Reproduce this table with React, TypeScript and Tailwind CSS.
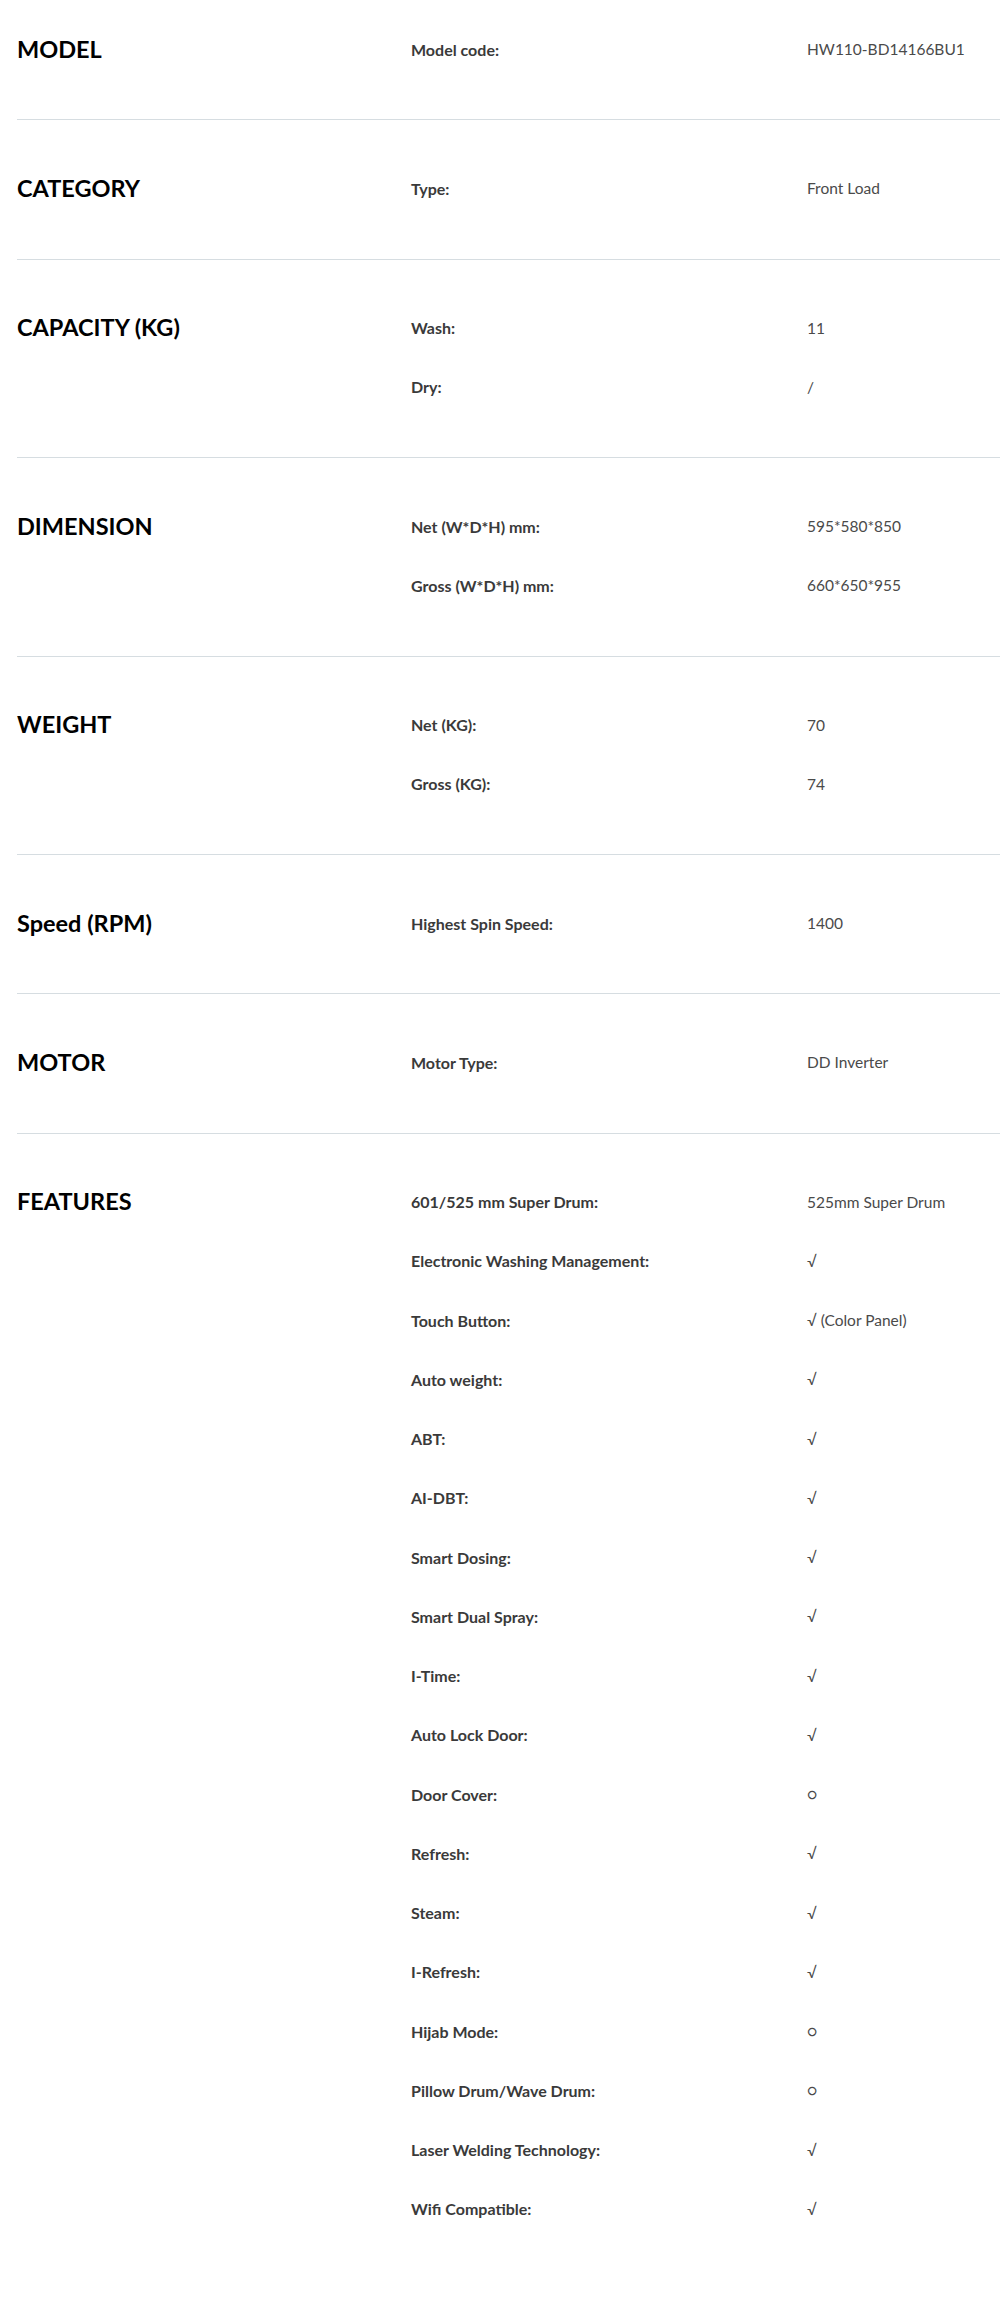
import React from 'react';

type Spec = { label: string; value: string };
type Section = { title: string; specs: Spec[] };

const SECTIONS: Section[] = [
  { title: 'MODEL', specs: [{ label: 'Model code:', value: 'HW110-BD14166BU1' }] },
  { title: 'CATEGORY', specs: [{ label: 'Type:', value: 'Front Load' }] },
  {
    title: 'CAPACITY (KG)',
    specs: [
      { label: 'Wash:', value: '11' },
      { label: 'Dry:', value: '/' },
    ],
  },
  {
    title: 'DIMENSION',
    specs: [
      { label: 'Net (W*D*H) mm:', value: '595*580*850' },
      { label: 'Gross (W*D*H) mm:', value: '660*650*955' },
    ],
  },
  {
    title: 'WEIGHT',
    specs: [
      { label: 'Net (KG):', value: '70' },
      { label: 'Gross (KG):', value: '74' },
    ],
  },
  { title: 'Speed (RPM)', specs: [{ label: 'Highest Spin Speed:', value: '1400' }] },
  { title: 'MOTOR', specs: [{ label: 'Motor Type:', value: 'DD Inverter' }] },
  {
    title: 'FEATURES',
    specs: [
      { label: '601/525 mm Super Drum:', value: '525mm Super Drum' },
      { label: 'Electronic Washing Management:', value: '√' },
      { label: 'Touch Button:', value: '√ (Color Panel)' },
      { label: 'Auto weight:', value: '√' },
      { label: 'ABT:', value: '√' },
      { label: 'AI-DBT:', value: '√' },
      { label: 'Smart Dosing:', value: '√' },
      { label: 'Smart Dual Spray:', value: '√' },
      { label: 'I-Time:', value: '√' },
      { label: 'Auto Lock Door:', value: '√' },
      { label: 'Door Cover:', value: '○' },
      { label: 'Refresh:', value: '√' },
      { label: 'Steam:', value: '√' },
      { label: 'I-Refresh:', value: '√' },
      { label: 'Hijab Mode:', value: '○' },
      { label: 'Pillow Drum/Wave Drum:', value: '○' },
      { label: 'Laser Welding Technology:', value: '√' },
      { label: 'Wifi Compatible:', value: '√' },
    ],
  },
];

function SpecSection({ section, first, last }: { section: Section; first: boolean; last: boolean }) {
  return (
    <div
      className={`flex ${first ? 'pt-[20px]' : 'pt-[39px]'} ${
        last ? 'pb-[27px]' : 'pb-[40px] border-b border-[#d6dde1]'
      }`}
    >
      <div className="w-[394px] shrink-0 h-[59.25px] flex items-center">
        <h3 className="text-[23.5px] font-bold text-black leading-none">{section.title}</h3>
      </div>
      <div className="flex-1">
        {section.specs.map((s) => (
          <div key={s.label} className="flex h-[59.25px] items-center">
            <div className="w-[396px] shrink-0 text-[16px] font-bold text-[#3a3a3a]">{s.label}</div>
            <div className="text-[15.5px] text-[#4a4a4a]">{s.value}</div>
          </div>
        ))}
      </div>
    </div>
  );
}

export default function App() {
  return (
    <div className="bg-white pl-[17px] font-['Lato','Liberation_Sans',sans-serif]">
      {SECTIONS.map((s, i) => (
        <SpecSection key={s.title} section={s} first={i === 0} last={i === SECTIONS.length - 1} />
      ))}
    </div>
  );
}
